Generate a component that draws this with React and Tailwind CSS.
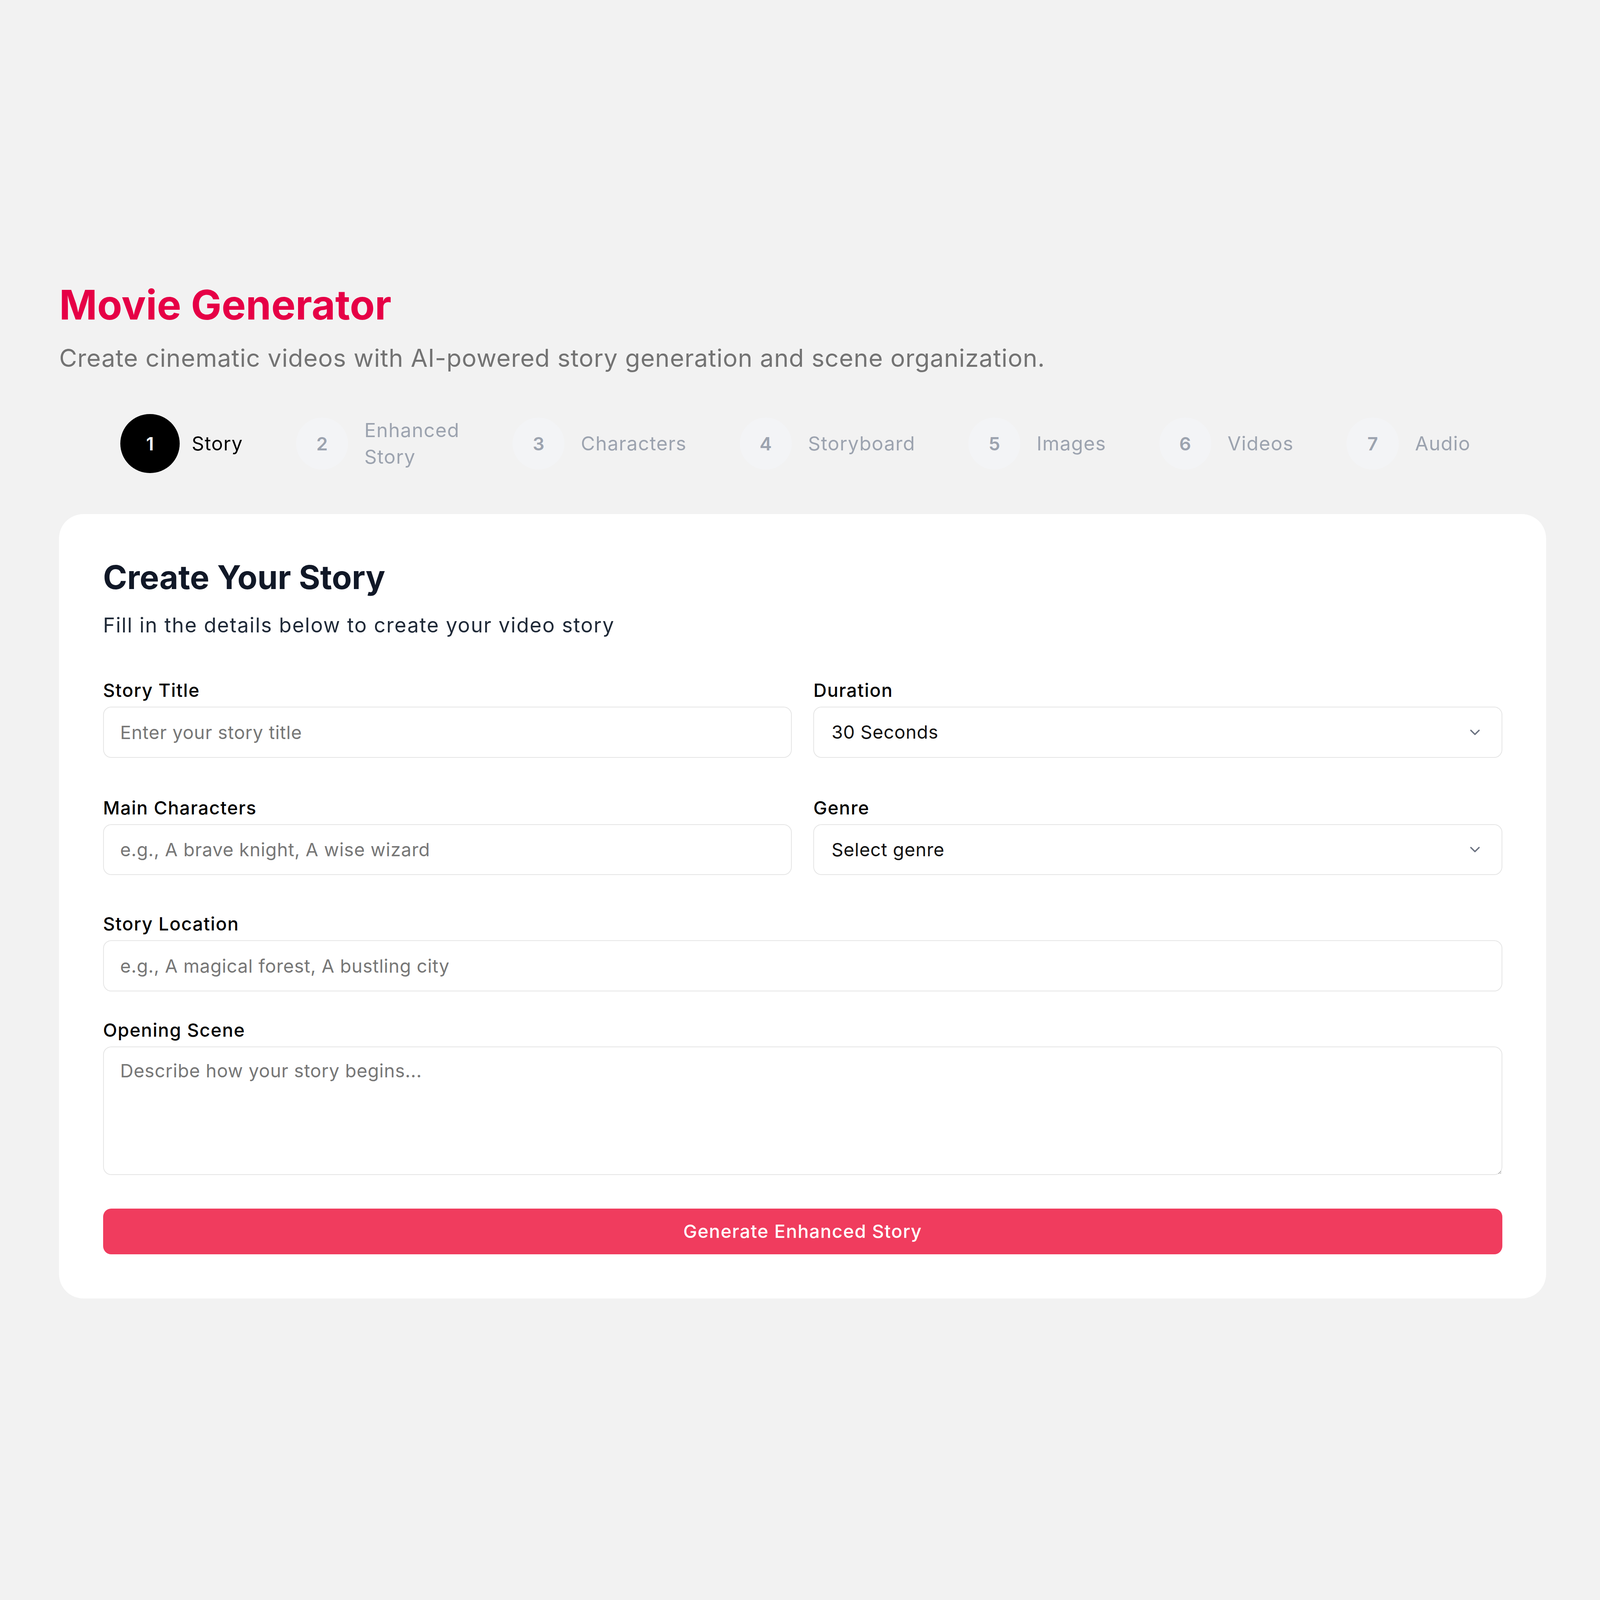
import React from "react";

const font = { fontFamily: "Inter, 'Noto Sans', sans-serif" };

const steps = [
  { n: 1, label: ["Story"] },
  { n: 2, label: ["Enhanced", "Story"] },
  { n: 3, label: ["Characters"] },
  { n: 4, label: ["Storyboard"] },
  { n: 5, label: ["Images"] },
  { n: 6, label: ["Videos"] },
  { n: 7, label: ["Audio"] },
];

function Chevron() {
  return (
    <svg width="16" height="16" viewBox="0 0 24 24" fill="none" stroke="#6b7280" strokeWidth="2" strokeLinecap="round" strokeLinejoin="round">
      <path d="m6 9 6 6 6-6" />
    </svg>
  );
}

function Field({ label, children }) {
  return (
    <div className="flex flex-col">
      <label className="text-[18px] leading-[24px] font-medium tracking-[0.6px] text-black mb-[4px]">{label}</label>
      {children}
    </div>
  );
}

function Input({ placeholder }) {
  return (
    <input
      placeholder={placeholder}
      className="h-[50px] w-full rounded-[8px] border border-[#e5e5e5] bg-white px-[16px] text-[18px] tracking-[0.3px] text-black placeholder:text-[#777777] outline-none"
    />
  );
}

function Select({ value }) {
  return (
    <div className="flex h-[50px] w-full items-center justify-between rounded-[8px] border border-[#e5e5e5] bg-white pl-[17px] pr-[18px] text-[18px] tracking-[0.3px] text-[#111111]">
      <span>{value}</span>
      <Chevron />
    </div>
  );
}

export default function App() {
  return (
    <div className="min-h-screen w-full bg-[#f2f2f2] overflow-hidden">
      <div className="[zoom:2.611] pl-[58px] pt-[275px] pb-[290px]" style={font}>
        <h1 className="text-[40px] leading-[48px] font-bold text-[#e60046]">Movie Generator</h1>
        <p className="mt-[12px] text-[24px] leading-[32px] tracking-[0.35px] text-[#737373]">
          Create cinematic videos with AI-powered story generation and scene organization.
        </p>

        <div className="mt-[39px] flex items-center gap-[52px] pl-[60px]">
          {steps.map((s) => {
            const active = s.n === 1;
            return (
              <div key={s.n} className={`flex items-center ${active ? "gap-[12px]" : "gap-[16px]"}`}>
                <div
                  className={
                    active
                      ? "flex h-[58px] w-[58px] items-center justify-center rounded-full bg-black text-[18px] font-semibold text-white"
                      : "flex h-[51px] w-[51px] items-center justify-center rounded-full bg-[#f3f4f6] text-[18px] font-semibold text-[#9ca3af]"
                  }
                >
                  {s.n}
                </div>
                <div className={`text-[19px] leading-[26px] tracking-[0.5px] ${active ? "text-black" : "text-[#9ca3af]"}`}>
                  {s.label.map((l) => (
                    <div key={l}>{l}</div>
                  ))}
                </div>
              </div>
            );
          })}
        </div>

        <div className="mt-[40px] w-[1458px] rounded-[24px] bg-white px-[43px] pt-[42px] pb-[43px]">
          <h2 className="text-[32px] leading-[40px] font-bold text-[#111827]">Create Your Story</h2>
          <p className="mt-[13px] text-[20px] leading-[28px] tracking-[0.75px] text-[#1f2937]">
            Fill in the details below to create your video story
          </p>

          <div className="mt-[38px] grid grid-cols-2 gap-x-[21px] gap-y-[37px]">
            <Field label="Story Title">
              <Input placeholder="Enter your story title" />
            </Field>
            <Field label="Duration">
              <Select value="30 Seconds" />
            </Field>
            <Field label="Main Characters">
              <Input placeholder="e.g., A brave knight, A wise wizard" />
            </Field>
            <Field label="Genre">
              <Select value="Select genre" />
            </Field>
          </div>

          <div className="mt-[36px]">
            <Field label="Story Location">
              <Input placeholder="e.g., A magical forest, A bustling city" />
            </Field>
          </div>

          <div className="mt-[26px]">
            <Field label="Opening Scene">
              <textarea
                placeholder="Describe how your story begins..."
                className="block h-[126px] w-full rounded-[8px] border border-[#e5e5e5] bg-white px-[16px] py-[10px] text-[18px] leading-[26px] tracking-[0.3px] text-black placeholder:text-[#777777] outline-none"
              />
            </Field>
          </div>

          <button className="mt-[33px] flex h-[45px] w-full items-center justify-center rounded-[8px] bg-[#f03c5e] text-[18px] font-medium tracking-[0.6px] text-white">
            Generate Enhanced Story
          </button>
        </div>
      </div>
    </div>
  );
}
